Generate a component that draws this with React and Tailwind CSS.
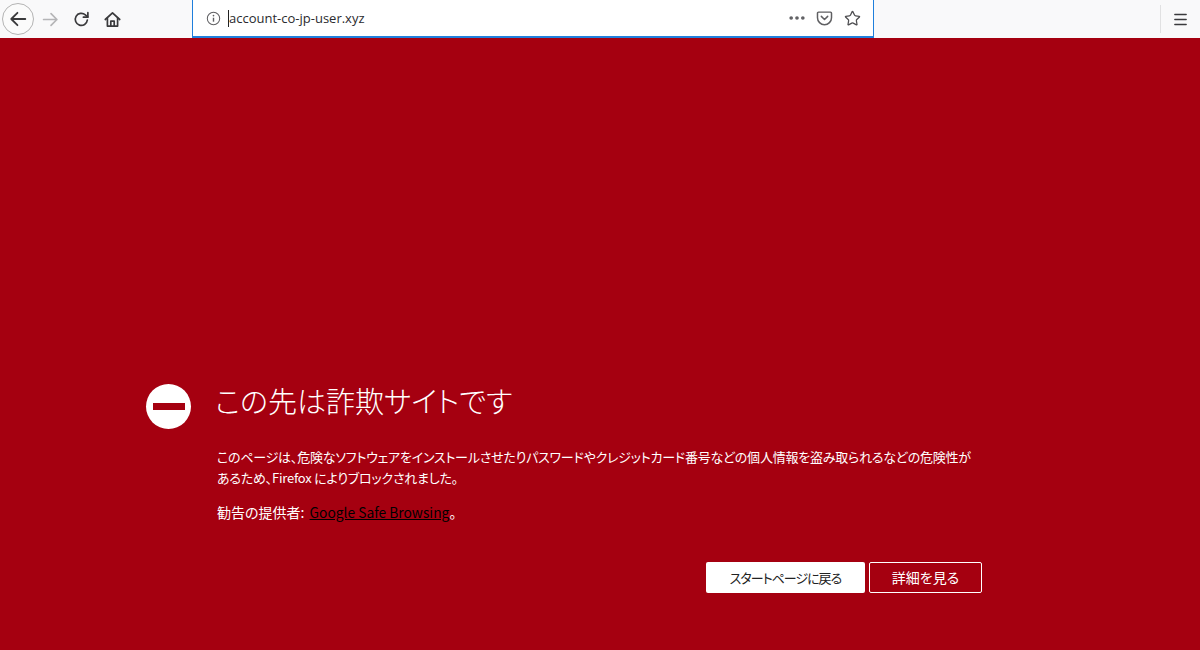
import { Ellipsis, Menu, Star } from 'lucide-react';

const jp = 'font-["Noto_Sans_CJK_JP","Liberation_Sans",sans-serif]';

function NavIcon({ children, className = '' }) {
  return (
    <svg viewBox="0 0 16 16" fill="none" stroke="currentColor" strokeWidth="1.6" strokeLinecap="round" strokeLinejoin="round" className={className}>
      {children}
    </svg>
  );
}

function Toolbar() {
  return (
    <div className="flex h-[38px] items-stretch bg-[#f9f9fa]">
      <div className="flex w-[192px] items-center pl-[2px]">
        <div className="flex h-[32px] w-[32px] items-center justify-center rounded-full border border-[#b4b4b4] bg-[#fbfbfb]">
          <NavIcon className="h-[18px] w-[18px] text-[#3a3a3c]">
            <path d="M14.5 8H2M7.5 2.5 2 8l5.5 5.5" />
          </NavIcon>
        </div>
        <NavIcon className="ml-[8px] h-[17px] w-[17px] text-[#b5b5b7]">
          <path d="M1.5 8H14M8.5 2.5 14 8l-5.5 5.5" />
        </NavIcon>
        <NavIcon className="ml-[14px] h-[17px] w-[17px] text-[#3a3a3c]">
          <path d="M13.5 8.5A5.7 5.7 0 1 1 11.6 3.6L13.8 5.5" />
          <path d="M14 1.6v4.2H9.8" />
        </NavIcon>
        <NavIcon className="ml-[14px] h-[17px] w-[17px] text-[#3a3a3c]">
          <path d="M1.2 8 8 1.8 14.8 8" />
          <path d="M3.2 7v7.2h9.6V7" />
          <path d="M6.4 14V9.6h3.2V14" />
        </NavIcon>
      </div>

      <div className="flex w-[682px] items-center border-x border-b-2 border-[#1f7fdc] bg-white">
        <svg viewBox="0 0 16 16" className="ml-[13px] h-[15px] w-[15px] text-[#5f5f62]" fill="none" stroke="currentColor">
          <circle cx="8" cy="8" r="6.6" strokeWidth="1.1" />
          <path d="M8 7.2v4.2" strokeWidth="1.5" />
          <circle cx="8" cy="4.9" r="0.9" fill="currentColor" stroke="none" />
        </svg>
        <div className="ml-[7px] h-[17px] w-px bg-[#222]" />
        <span className={'text-[13px] leading-none text-[#2a2a2e] font-["Open_Sans",sans-serif]'}>account-co-jp-user.xyz</span>
        <Ellipsis className="ml-auto h-[20px] w-[20px] text-[#5f5f62]" strokeWidth={2.4} />
        <svg viewBox="0 0 16 16" className="ml-[9px] h-[17px] w-[17px] text-[#5f5f62]" fill="none" stroke="currentColor" strokeWidth="1.4" strokeLinecap="round" strokeLinejoin="round">
          <path d="M2.4 2h11.2a1 1 0 0 1 1 1v4.2a6.6 6.6 0 0 1-13.2 0V3a1 1 0 0 1 1-1Z" />
          <path d="m5 6 3 3 3-3" />
        </svg>
        <Star className="ml-[11px] mr-[12px] h-[17px] w-[17px] text-[#4f4f52]" strokeWidth={1.8} />
      </div>

      <div className="flex flex-1 items-center justify-end">
        <div className="h-[28px] w-px bg-[#e1e1e2]" />
        <Menu className="mx-[11px] h-[17px] w-[17px] text-[#3a3a3c]" strokeWidth={2} />
      </div>
    </div>
  );
}

export default function App() {
  return (
    <div className={'flex h-[650px] w-[1200px] flex-col overflow-hidden bg-[#a50010] ' + jp}>
      <Toolbar />
      <main className="flex pl-[146px] pt-[346px]">
        <div className="flex h-[45px] w-[45px] items-center justify-center rounded-full bg-white">
          <div className="h-[7px] w-[32px] bg-[#a50010]" />
        </div>
        <div className="ml-[26px] w-[765px] text-white">
          <h1 className="-ml-[2px] -mt-[2px] text-[29px] font-light leading-[36px] [font-feature-settings:'palt']">この先は詐欺サイトです</h1>
          <p className="mt-[28px] max-w-[758px] text-[13px] leading-[21px] tracking-[-0.23px] [font-feature-settings:'palt']">
            このページは、危険なソフトウェアをインストールさせたりパスワードやクレジットカード番号などの個人情報を盗み取られるなどの危険性があるため、Firefox によりブロックされました。
          </p>
          <p className="mt-[14px] text-[14px] leading-[20px] [font-feature-settings:'palt']">
            勧告の提供者: <span className="ml-[2px] text-[13.8px] text-black underline">Google Safe Browsing</span>。
          </p>
          <div className="mt-[40px] flex justify-end gap-[4px]">
            <button className="h-[31px] w-[159px] rounded-[2px] bg-white text-[13px] tracking-[-1px] text-[#222] [font-feature-settings:'palt']">スタートページに戻る</button>
            <button className="h-[31px] w-[113px] rounded-[2px] border border-white text-[14px] text-white [font-feature-settings:'palt']">詳細を見る</button>
          </div>
        </div>
      </main>
    </div>
  );
}
